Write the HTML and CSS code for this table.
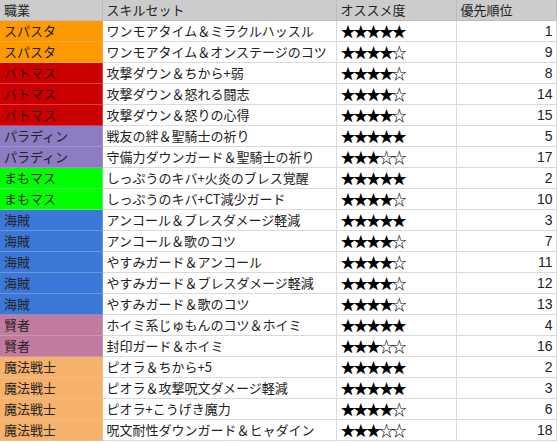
FILE: index.html
```html
<!DOCTYPE html>
<html lang="ja">
<head>
<meta charset="utf-8">
<link rel="stylesheet" href="styles.css">
</head>
<body>
<table class="sheet">
<colgroup><col class="c1"><col class="c2"><col class="c3"><col class="c4"></colgroup>
<thead>
<tr><th>職業</th><th>スキルセット</th><th>オススメ度</th><th>優先順位</th></tr>
</thead>
<tbody>
<tr><td class="job sp">スパスタ</td><td>ワンモアタイム＆ミラクルハッスル</td><td class="star">★★★★★</td><td class="num">1</td></tr>
<tr><td class="job sp">スパスタ</td><td>ワンモアタイム＆オンステージのコツ</td><td class="star">★★★★☆</td><td class="num">9</td></tr>
<tr><td class="job bm">バトマス</td><td>攻撃ダウン＆ちから+弱</td><td class="star">★★★★☆</td><td class="num">8</td></tr>
<tr><td class="job bm">バトマス</td><td>攻撃ダウン＆怒れる闘志</td><td class="star">★★★★☆</td><td class="num">14</td></tr>
<tr><td class="job bm">バトマス</td><td>攻撃ダウン＆怒りの心得</td><td class="star">★★★★☆</td><td class="num">15</td></tr>
<tr><td class="job pl">パラディン</td><td>戦友の絆＆聖騎士の祈り</td><td class="star">★★★★★</td><td class="num">5</td></tr>
<tr><td class="job pl">パラディン</td><td>守備力ダウンガード＆聖騎士の祈り</td><td class="star">★★★☆☆</td><td class="num">17</td></tr>
<tr><td class="job mm">まもマス</td><td>しっぷうのキバ+火炎のブレス覚醒</td><td class="star">★★★★★</td><td class="num">2</td></tr>
<tr><td class="job mm">まもマス</td><td>しっぷうのキバ+CT減少ガード</td><td class="star">★★★★☆</td><td class="num">10</td></tr>
<tr><td class="job kz">海賊</td><td>アンコール＆ブレスダメージ軽減</td><td class="star">★★★★★</td><td class="num">3</td></tr>
<tr><td class="job kz">海賊</td><td>アンコール＆歌のコツ</td><td class="star">★★★★☆</td><td class="num">7</td></tr>
<tr><td class="job kz">海賊</td><td>やすみガード＆アンコール</td><td class="star">★★★★☆</td><td class="num">11</td></tr>
<tr><td class="job kz">海賊</td><td>やすみガード＆ブレスダメージ軽減</td><td class="star">★★★★☆</td><td class="num">12</td></tr>
<tr><td class="job kz">海賊</td><td>やすみガード＆歌のコツ</td><td class="star">★★★★☆</td><td class="num">13</td></tr>
<tr><td class="job kj">賢者</td><td>ホイミ系じゅもんのコツ＆ホイミ</td><td class="star">★★★★★</td><td class="num">4</td></tr>
<tr><td class="job kj">賢者</td><td>封印ガード＆ホイミ</td><td class="star">★★★☆☆</td><td class="num">16</td></tr>
<tr><td class="job mh">魔法戦士</td><td>ピオラ＆ちから+5</td><td class="star">★★★★★</td><td class="num">2</td></tr>
<tr><td class="job mh">魔法戦士</td><td>ピオラ＆攻撃呪文ダメージ軽減</td><td class="star">★★★★★</td><td class="num">3</td></tr>
<tr><td class="job mh">魔法戦士</td><td>ピオラ+こうげき魔力</td><td class="star">★★★★☆</td><td class="num">6</td></tr>
<tr><td class="job mh">魔法戦士</td><td>呪文耐性ダウンガード＆ヒャダイン</td><td class="star">★★★☆☆</td><td class="num">18</td></tr>
</tbody>
</table>
</body>
</html>
```
FILE: styles.css
```css
html, body {
  margin: 0;
  padding: 0;
  background: #ffffff;
}
.sheet {
  border-collapse: collapse;
  table-layout: fixed;
  width: 556px;
  font-family: "Noto Sans CJK JP", "Noto Sans", sans-serif;
  font-size: 13px;
  color: #222222;
}
.c1 { width: 102px; }
.c2 { width: 234px; }
.c3 { width: 120px; }
.c4 { width: 100px; }
.sheet th, .sheet td {
  height: 20px;
  padding: 0 3px 0 4px;
  border: 1px solid #dadada;
  line-height: 20px;
  white-space: nowrap;
  overflow: hidden;
  text-align: left;
  font-weight: normal;
}
.sheet th {
  background: #cccccc;
  border-color: #bdbdbd;
}
.sheet tr > :first-child { border-left: none; }
.sheet thead th { border-top: none; }
.num {
  text-align: right !important;
  font-family: "Liberation Sans", Arial, sans-serif;
  font-size: 14px;
}
.star {
  font-size: 15px;
  letter-spacing: -2.2px;
  color: #000;
}
.sp { background: #ff9900; border-color: #f0a940 !important; }
.bm { background: #cc0000; border-color: #d84040 !important; color: #3a0000; }
.pl { background: #8e7cc3; border-color: #a192cc !important; }
.mm { background: #00ff00; border-color: #58ec58 !important; }
.kz { background: #3c78d8; border-color: #6c95dc !important; }
.kj { background: #c27ba0; border-color: #c995b0 !important; }
.mh { background: #f6b26b; border-color: #efbd85 !important; }
```
